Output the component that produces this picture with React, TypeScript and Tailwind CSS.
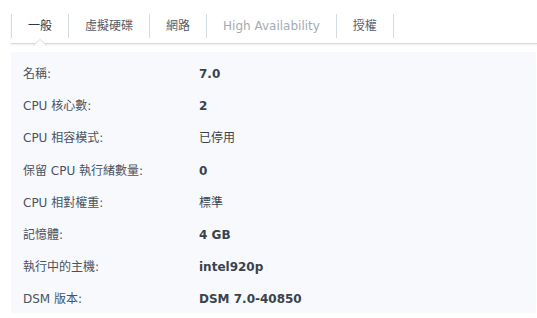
import React from "react"

const tabs = [
  { label: "一般", active: true },
  { label: "虛擬硬碟" },
  { label: "網路" },
  { label: "High Availability", disabled: true },
  { label: "授權" },
]

const rows: { label: string; value: string; bold?: boolean }[] = [
  { label: "名稱:", value: "7.0", bold: true },
  { label: "CPU 核心數:", value: "2", bold: true },
  { label: "CPU 相容模式:", value: "已停用" },
  { label: "保留 CPU 執行緒數量:", value: "0", bold: true },
  { label: "CPU 相對權重:", value: "標準" },
  { label: "記憶體:", value: "4 GB", bold: true },
  { label: "執行中的主機:", value: "intel920p", bold: true },
  { label: "DSM 版本:", value: "DSM 7.0-40850", bold: true },
]

export default function App() {
  return (
    <div
      className="w-[537px] h-[318px] bg-white overflow-hidden"
      style={{ fontFamily: '"DejaVu Sans", "Noto Sans CJK TC", sans-serif' }}
    >
      {/* Tabs */}
      <div className="ml-[11px] pt-[14px]">
        <div className="relative border-b border-[#d6dae0] shadow-[0_1px_2px_rgba(0,0,0,0.08)] pb-[5px]">
          <div className="flex h-[24px] border-l border-[#d3dae3]">
            {tabs.map((t) => (
              <div
                key={t.label}
                className={
                  "relative flex items-center px-[16px] border-r border-[#d3dae3] text-[12px] leading-none " +
                  (t.active ? "text-[#2d3a4a]" : t.disabled ? "text-[#a3abb5]" : "text-[#56606b]")
                }
              >
                {t.label}
                {t.active && (
                  <svg
                    className="absolute left-[21px] top-[25px]"
                    width="14"
                    height="7"
                    viewBox="0 0 14 7"
                  >
                    <path d="M0 6.5 L7 0.5 L14 6.5 Z" fill="#ffffff" />
                    <path d="M0 6.5 L7 0.5 L14 6.5" fill="none" stroke="#d6dae0" strokeWidth="1" />
                  </svg>
                )}
              </div>
            ))}
          </div>
        </div>
      </div>

      {/* Content */}
      <div className="ml-[11px] mr-[1px] mt-[8px] h-[261px] bg-[#f7f9fd] pl-[12px] pt-[6px]">
        {rows.map((r) => (
          <div key={r.label} className="flex items-center h-[32.2px] text-[12px]">
            <div className="w-[176px] text-[#4a535d]">{r.label}</div>
            <div className={r.bold ? "font-bold text-[#3a434d]" : "text-[#3a434d]"}>{r.value}</div>
          </div>
        ))}
      </div>
    </div>
  )
}
